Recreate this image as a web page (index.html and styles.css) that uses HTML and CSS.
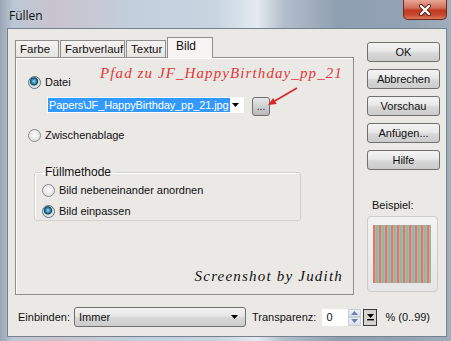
FILE: index.html
```html
<!DOCTYPE html>
<html lang="de">
  <head>
    <meta charset="UTF-8" />
    <title>Füllen</title>
    <link rel="stylesheet" href="styles.css">
  </head>
  <body>
    <div class="window">
      <div class="titlebar">
        <span class="title">Füllen</span>
        <div class="close">
          <svg width="18" height="12" viewBox="0 0 18 12">
            <path d="M5 2 L13 10 M13 2 L5 10" stroke="#5a1a10" stroke-width="4" stroke-linecap="round" />
            <path d="M5 2 L13 10 M13 2 L5 10" stroke="#fff" stroke-width="2.4" stroke-linecap="round" />
          </svg>
        </div>
      </div>

      <div class="client">
        <div class="top">
          <div class="tabcol">
            <div class="tabs">
              <div class="tab">Farbe</div>
              <div class="tab">Farbverlauf</div>
              <div class="tab">Textur</div>
              <div class="tab active">Bild</div>
            </div>
            <div class="panel">
              <div class="option"><span class="radio on"></span>Datei</div>
              <div class="file-row">
                <div class="combo">
                  <span class="sel">Papers\JF_HappyBirthday_pp_21.jpg</span>
                  <svg class="drop" width="7" height="4" viewBox="0 0 7 4"><path d="M0 0 H7 L3.5 4 Z" fill="#000" /></svg>
                </div>
                <div class="browse">...</div>
              </div>
              <div class="option clip"><span class="radio"></span>Zwischenablage</div>

              <fieldset class="group">
                <legend>Füllmethode</legend>
                <div class="option"><span class="radio"></span>Bild nebeneinander anordnen</div>
                <div class="option second"><span class="radio on"></span>Bild einpassen</div>
              </fieldset>

              <div class="credit">Screenshot by Judith</div>

              <div class="note">Pfad zu JF_HappyBirthday_pp_21</div>
              <svg class="pointer" width="300" height="60" viewBox="0 0 300 60">
                <path d="M281 30 L257 44" stroke="#d8262a" stroke-width="1.6" />
                <polygon points="252,47 260.7,46 257.1,39.9" fill="#d8262a" />
              </svg>
            </div>
          </div>

          <div class="side">
            <div class="btn">OK</div>
            <div class="btn">Abbrechen</div>
            <div class="btn">Vorschau</div>
            <div class="btn">Anfügen...</div>
            <div class="btn">Hilfe</div>
            <div class="sample-label">Beispiel:</div>
            <div class="sample">
              <div class="stripes"></div>
            </div>
          </div>
        </div>

        <div class="bottom">
          <span class="lbl">Einbinden:</span>
          <div class="select">
            <span>Immer</span>
            <svg width="7" height="4" viewBox="0 0 7 4"><path d="M0 0 H7 L3.5 4 Z" fill="#000" /></svg>
          </div>
          <span class="lbl trans">Transparenz:</span>
          <div class="number">0</div>
          <div class="spin">
            <div class="spin-half"><svg width="7" height="4" viewBox="0 0 7 4"><path d="M0 4 H7 L3.5 0 Z" fill="#6f7fa8" /></svg></div>
            <div class="spin-half"><svg width="7" height="4" viewBox="0 0 7 4"><path d="M0 0 H7 L3.5 4 Z" fill="#6f7fa8" /></svg></div>
          </div>
          <div class="dropbtn">
            <svg width="9" height="8" viewBox="0 0 9 8"><path d="M1 1 H8 L4.5 5 Z" fill="#000" /><rect x="1" y="6" width="7" height="1.4" fill="#000" /></svg>
          </div>
          <span class="lbl range">% (0..99)</span>
        </div>
      </div>
    </div>
  </body>
</html>
```

FILE: styles.css
```css
body {
  margin: 0;
  font-family: "Liberation Sans", Arial, sans-serif;
  font-size: 11px;
  color: #111;
  background: #6f7a86;
}
.window {
  width: 451px;
  height: 341px;
  box-sizing: border-box;
  padding: 0 4px 4px 7px;
  background: linear-gradient(90deg, #9aa6b4 0, #bcc8d5 3%, #c9c3cd 12%, #c2cfdc 30%, #c8d5e1 48%, #e4eaf0 57%, #b2becc 63%, #8f9fb2 75%, #93a2b4 90%, #a0adbc 100%);
  display: flex;
  flex-direction: column;
}
.titlebar {
  height: 28px;
  display: flex;
  align-items: flex-start;
}
.title {
  font-family: "Open Sans", "Noto Sans", sans-serif;
  font-size: 12px;
  margin: 7px 0 0 2px;
}
.close {
  margin-left: auto;
  width: 44px;
  height: 20px;
  box-sizing: border-box;
  border: 1px solid #6b2a22;
  border-top: none;
  border-radius: 0 0 5px 5px;
  background: linear-gradient(180deg, #e7a795 0, #d3725e 40%, #c23a22 55%, #c94a30 80%, #dc7a5e 100%);
  display: flex;
  align-items: center;
  justify-content: center;
}
.client {
  flex: 1;
  border: 1px solid #76838f;
  background: #ebe9e6;
  padding: 8px 0 0 7px;
  display: flex;
  flex-direction: column;
}
.top {
  display: flex;
  height: 258px;
}
.tabcol {
  width: 339px;
  display: flex;
  flex-direction: column;
}
.tabs {
  display: flex;
  align-items: flex-end;
  height: 20px;
}
.tab {
  height: 18px;
  box-sizing: border-box;
  padding: 2px 0 0 4px;
  border: 1px solid #8e8e8e;
  border-bottom: none;
  background: linear-gradient(180deg, #f4f3f1 0, #e6e4e0 100%);
  margin-bottom: -1px;
  font-size: 11.5px;
  white-space: nowrap;
  overflow: hidden;
}
.tab + .tab {
  margin-left: 1px;
}
.tab.active {
  height: 21px;
  width: 46px;
  padding: 1px 0 0 8px;
  background: #f6f5f3;
  position: relative;
  z-index: 1;
  font-size: 12px;
}
.tab:nth-child(1) { width: 44px; }
.tab:nth-child(2) { width: 65px; }
.tab:nth-child(3) { width: 40px; }
.panel {
  position: relative;
  flex: 1;
  border: 1px solid #8e8e8e;
  box-shadow: inset 1px 1px 0 #fff;
  padding: 17px 0 9px 12px;
  display: flex;
  flex-direction: column;
}
.option {
  display: flex;
  align-items: center;
  height: 14px;
}
.radio {
  width: 13px;
  height: 13px;
  box-sizing: border-box;
  border-radius: 50%;
  border: 1px solid #8c8c8c;
  background: radial-gradient(circle at 50% 45%, #fdfdfd 0, #eeeeee 45%, #cfcfcf 100%);
  margin-right: 4px;
  flex: none;
}
.radio.on {
  border-color: #5b6f7c;
  background: radial-gradient(circle at 45% 40%, #a9e0f5 0, #3f93bd 22%, #124660 42%, #c9d1d6 50%, #f2f2f2 70%, #c6c6c6 100%);
}
.file-row {
  display: flex;
  height: 20px;
  margin: 7px 0 0 18px;
}
.combo {
  width: 199px;
  height: 18px;
  box-sizing: border-box;
  background: #fff;
  border: 1px solid #e6e6e6;
  display: flex;
  align-items: center;
  padding-left: 1px;
}
.sel {
  background: #3399ff;
  color: #fff;
  line-height: 14px;
  padding: 0 1px;
  white-space: nowrap;
  letter-spacing: -0.1px;
}
.drop {
  margin-left: auto;
  margin-right: 5px;
}
.browse {
  width: 18px;
  height: 19px;
  box-sizing: border-box;
  margin: 1px 0 0 7px;
  border: 1px solid #6f6f6f;
  border-radius: 3px;
  background: linear-gradient(180deg, #e8e8e8 0, #cfcfcf 50%, #b9b9b9 100%);
  text-align: center;
  line-height: 17px;
  font-size: 10px;
}
.option.clip {
  margin-top: 12px;
}
.group {
  margin: 24px 0 0 6px;
  width: 267px;
  box-sizing: border-box;
  padding: 0 0 2px 7px;
  border: 1px solid #d3d1cd;
  border-radius: 3px;
  box-shadow: inset 1px 1px 0 #fff;
}
.group legend {
  padding: 0 3px;
  line-height: 13px;
  font-size: 12px;
}
.group .option {
  margin-top: 4px;
}
.group .option.second {
  margin-top: 7px;
}
.credit {
  margin-top: auto;
  align-self: flex-end;
  margin-right: 10px;
  font-family: "Liberation Serif", serif;
  font-style: italic;
  font-size: 15px;
  letter-spacing: 1.2px;
}
.note {
  position: absolute;
  left: 84px;
  top: 7px;
  color: #e03838;
  font-family: "Liberation Serif", serif;
  font-style: italic;
  font-size: 15px;
  letter-spacing: 1.1px;
}
.pointer {
  position: absolute;
  left: 0;
  top: 0;
}
.side {
  width: 73px;
  margin-left: 13px;
  padding-top: 5px;
  display: flex;
  flex-direction: column;
  gap: 7px;
}
.btn {
  height: 20px;
  box-sizing: border-box;
  border: 1px solid #707070;
  border-radius: 3px;
  background: linear-gradient(180deg, #f4f4f4 0, #e9e9e9 45%, #d8d8d8 55%, #cbcbcb 100%);
  text-align: center;
  line-height: 18px;
}
.sample-label {
  margin: 22px 0 0 5px;
}
.sample {
  margin-top: -2px;
  width: 71px;
  height: 76px;
  box-sizing: border-box;
  border: 1px solid #cdcdcd;
  border-radius: 4px;
  background: linear-gradient(180deg, #f3f3f3 0, #e6e6e6 100%);
  padding: 8px 0 0 5px;
}
.stripes {
  width: 58px;
  height: 58px;
  background: repeating-linear-gradient(90deg, #d9796f 0 2px, #e8a083 2px 3px, #86bf9a 3px 5px, #9fb8d6 5px 6px);
}
.bottom {
  display: flex;
  align-items: center;
  height: 20px;
  margin-top: 12px;
  padding-left: 3px;
}
.select {
  width: 172px;
  height: 20px;
  box-sizing: border-box;
  margin-left: 4px;
  border: 1px solid #707070;
  border-radius: 3px;
  background: linear-gradient(180deg, #f3f3f3 0, #e6e6e6 45%, #d6d6d6 55%, #cdcdcd 100%);
  display: flex;
  align-items: center;
  padding: 0 7px 0 4px;
  justify-content: space-between;
}
.trans {
  margin-left: 6px;
}
.number {
  width: 25px;
  height: 17px;
  box-sizing: border-box;
  margin-left: 6px;
  background: #fff;
  padding: 2px 0 0 4px;
}
.spin {
  width: 15px;
  height: 17px;
  display: flex;
  flex-direction: column;
  background: #fff;
}
.spin-half {
  flex: 1;
  margin: 0 1px;
  background: linear-gradient(180deg, #eef0f6, #dde1ec);
  border: 1px solid #c6cbd8;
  display: flex;
  align-items: center;
  justify-content: center;
}
.dropbtn {
  width: 14px;
  height: 17px;
  box-sizing: border-box;
  margin-left: 1px;
  border: 1px solid #3a3a3a;
  background: #d6d3ce;
  display: flex;
  align-items: center;
  justify-content: center;
}
.range {
  margin-left: 8px;
}
```
